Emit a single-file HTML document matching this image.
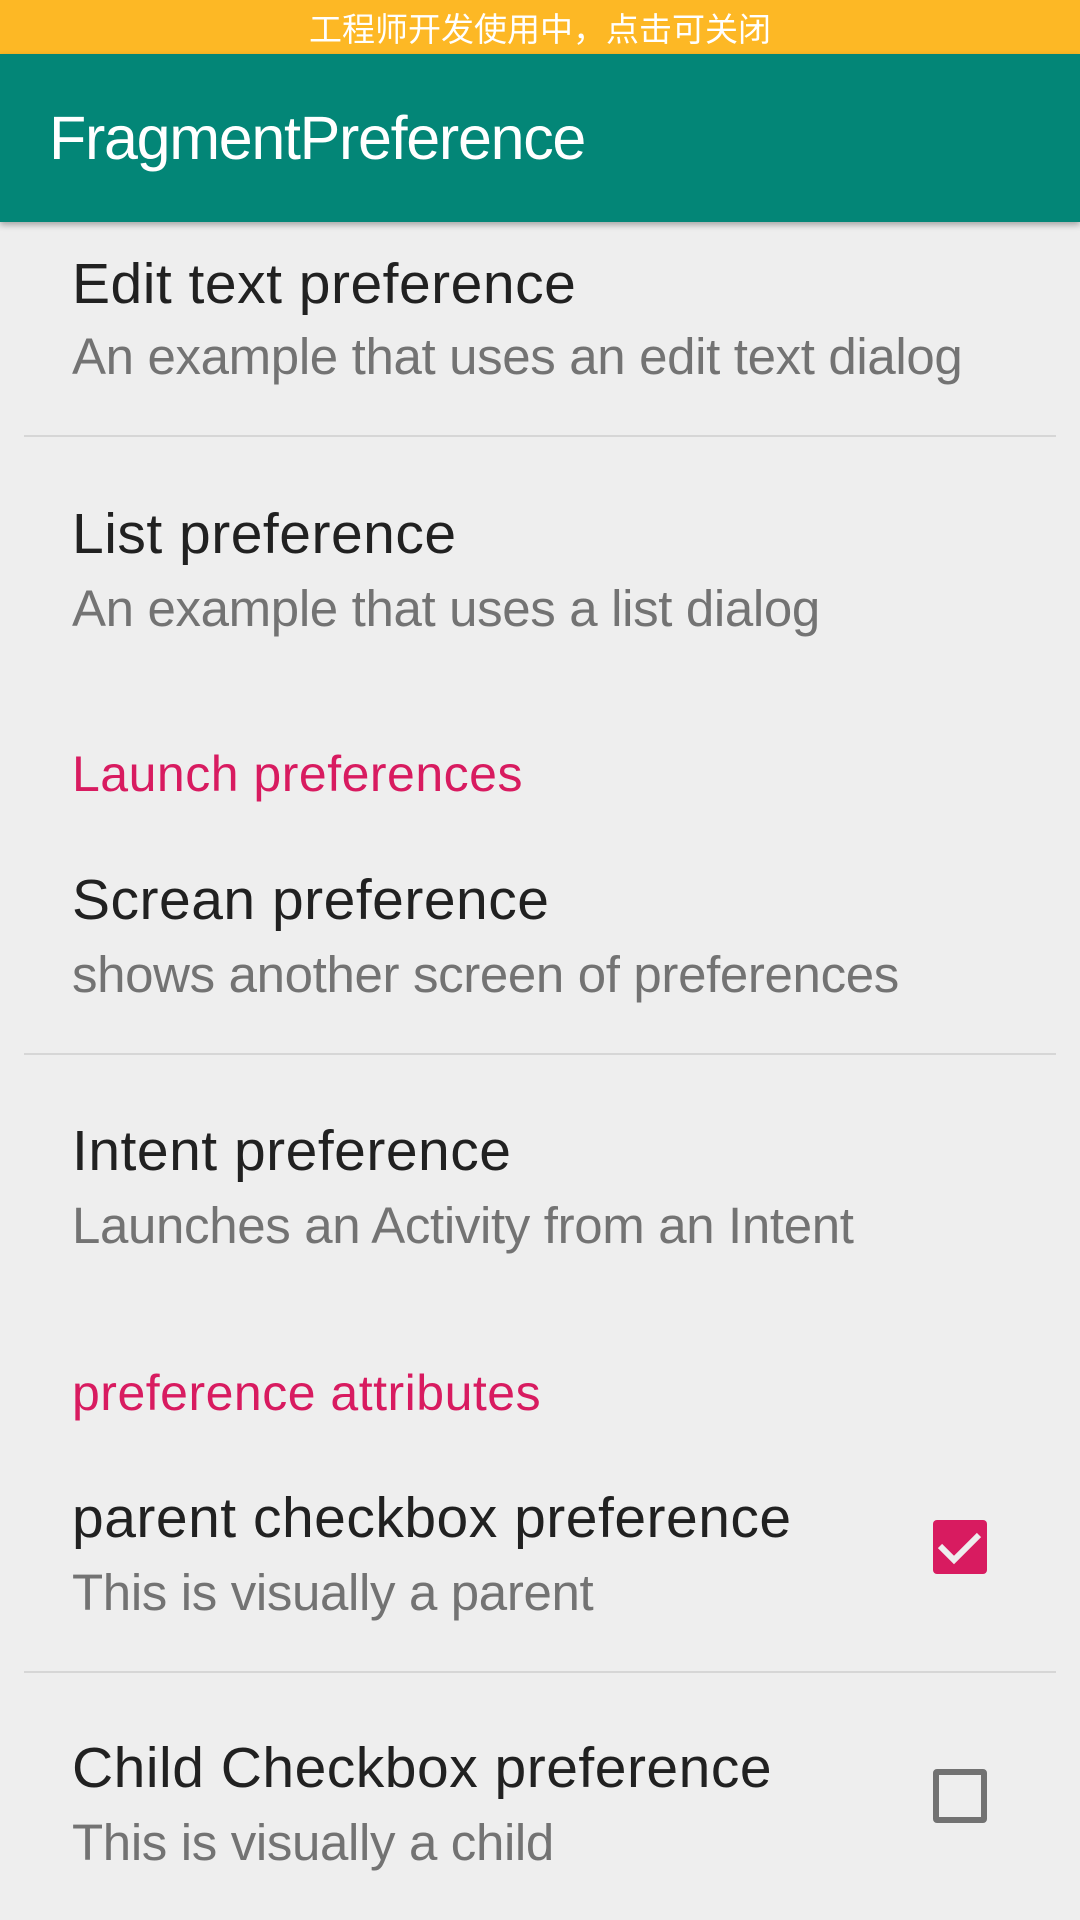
<!DOCTYPE html>
<html><head><meta charset="utf-8"><style>
*{margin:0;padding:0;box-sizing:border-box}
html,body{width:1080px;height:1920px;overflow:hidden;background:#eeeeee;font-family:"Liberation Sans","Noto Sans CJK SC",sans-serif}
.sb{position:absolute;left:0;top:0;width:1080px;height:54px;background:#fdb825;color:#fff;font-size:33px;text-align:center;line-height:54px;font-family:"Noto Sans CJK SC",sans-serif}
.tb{position:absolute;left:0;top:54px;width:1080px;height:168px;background:#038677;box-shadow:0 3px 6px rgba(0,0,0,.3);z-index:2}
.tb div{position:absolute;left:49px;top:54px;color:#fff;font-size:61px;line-height:61px;letter-spacing:-1.3px}
.t,.s,.c{position:absolute;left:72px;line-height:1;white-space:nowrap}
.t{font-size:57px;color:#212121;letter-spacing:0.5px}
.s{font-size:51px;color:#737373;letter-spacing:-0.35px}
.c{font-size:50px;color:#d81b60;letter-spacing:0.5px}
.d{position:absolute;left:24px;width:1032px;height:2px;background:#d6d6d6}
.cb{position:absolute;left:933px;width:54px;height:54px;border-radius:4px}
</style></head><body>
<div class="sb">工程师开发使用中，点击可关闭</div>
<div class="tb"><div>FragmentPreference</div></div>
<div class="t" style="top:256px">Edit text preference</div>
<div class="s" style="top:331px">An example that uses an edit text dialog</div>
<div class="d" style="top:435px"></div>
<div class="t" style="top:506px">List preference</div>
<div class="s" style="top:583px">An example that uses a list dialog</div>
<div class="c" style="top:749px">Launch preferences</div>
<div class="t" style="top:872px">Screan preference</div>
<div class="s" style="top:949px">shows another screen of preferences</div>
<div class="d" style="top:1053px"></div>
<div class="t" style="top:1123px">Intent preference</div>
<div class="s" style="top:1200px">Launches an Activity from an Intent</div>
<div class="c" style="top:1368px">preference attributes</div>
<div class="t" style="top:1490px">parent checkbox preference</div>
<div class="s" style="top:1567px">This is visually a parent</div>
<div class="cb" style="top:1520px;background:#d81b60"><svg width="54" height="54" viewBox="0 0 54 54"><path d="M7 26 L21 40 L46 15" fill="none" stroke="#eee" stroke-width="6"/></svg></div>
<div class="d" style="top:1671px"></div>
<div class="t" style="top:1740px">Child Checkbox preference</div>
<div class="s" style="top:1817px">This is visually a child</div>
<div class="cb" style="top:1769px;border:6px solid #727272"></div>
</body></html>
